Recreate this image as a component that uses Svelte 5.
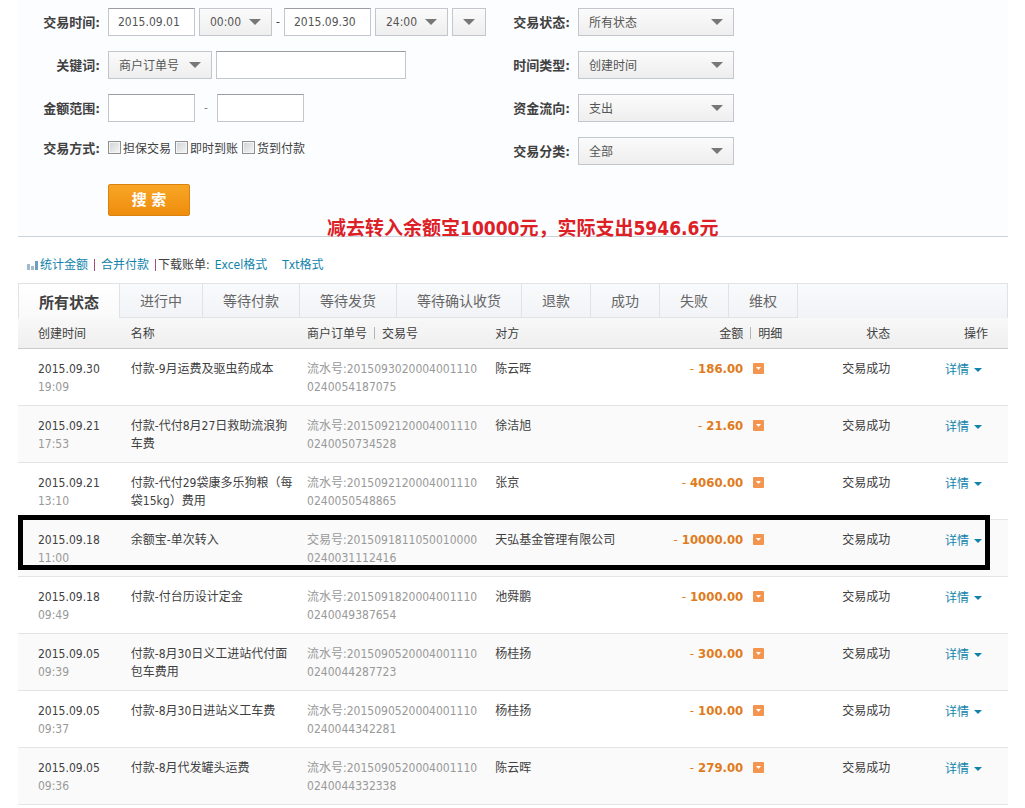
<script>
  const times = ["00:00", "24:00"];
  const methods = ["担保交易", "即时到账", "货到付款"];

  const filters = [
    ["status", "交易状态", "所有状态"],
    ["timeType", "时间类型", "创建时间"],
    ["flow", "资金流向", "支出"],
    ["category", "交易分类", "全部"],
  ];

  const tabs = ["所有状态", "进行中", "等待付款", "等待发货", "等待确认收货", "退款", "成功", "失败", "维权"];
  let activeTab = "所有状态";

  const records = [
    ["2015.09.30", "19:09", "付款-9月运费及驱虫药成本", "流水号:2015093020004001110", "0240054187075", "陈云晖", "186.00"],
    ["2015.09.21", "17:53", "付款-代付8月27日救助流浪狗车费", "流水号:2015092120004001110", "0240050734528", "徐洁旭", "21.60"],
    ["2015.09.21", "13:10", "付款-代付29袋康多乐狗粮（每袋15kg）费用", "流水号:2015092120004001110", "0240050548865", "张京", "4060.00"],
    ["2015.09.18", "11:00", "余额宝-单次转入", "交易号:2015091811050010000", "0240031112416", "天弘基金管理有限公司", "10000.00", true],
    ["2015.09.18", "09:49", "付款-付台历设计定金", "流水号:2015091820004001110", "0240049387654", "池舜鹏", "1000.00"],
    ["2015.09.05", "09:39", "付款-8月30日义工进站代付面包车费用", "流水号:2015090520004001110", "0240044287723", "杨桂扬", "300.00"],
    ["2015.09.05", "09:37", "付款-8月30日进站义工车费", "流水号:2015090520004001110", "0240044342281", "杨桂扬", "100.00"],
    ["2015.09.05", "09:36", "付款-8月代发罐头运费", "流水号:2015090520004001110", "0240044332338", "陈云晖", "279.00"],
  ];
</script>

<style>
  :global(body) {
    background-color: #ffffff;
    color: #404040;
    font: 12px/18px "DejaVu Sans Condensed", "Noto Sans CJK SC", sans-serif;
  }
  main {
    margin: 0 17px 0 18px;
  }
  a {
    color: #1183ab;
    text-decoration: none;
  }
  input, select, button {
    box-sizing: border-box;
    font: inherit;
    color: #555555;
  }
  .search {
    position: relative;
    display: flex;
    padding-bottom: 20px;
    background-color: #fcfdff;
    border-bottom: 1px solid #ccd3dc;
  }
  .left {
    width: 470px;
    padding-top: 8px;
  }
  .right {
    padding-top: 8px;
  }
  .row {
    display: flex;
    align-items: center;
    height: 28px;
    margin-bottom: 15px;
  }
  .label {
    width: 82px;
    margin-right: 8px;
    padding-top: 2px;
    flex-shrink: 0;
    font-size: 13px;
    font-weight: bold;
    text-align: right;
  }
  .text {
    height: 28px;
    padding: 0 9px;
    border: 1px solid #c3c6cc;
    border-top-color: #9a9da3;
    background-color: #ffffff;
  }
  .date {
    width: 87px;
  }
  .keyword {
    width: 190px;
  }
  .drop {
    position: relative;
    margin: 0 4px;
  }
  .drop select {
    display: block;
    width: 100%;
    height: 28px;
    padding: 2px 10px 0;
    border: 1px solid #c3c6cc;
    border-radius: 0;
    background: linear-gradient(#fbfbfb, #eeeeee);
    appearance: none;
  }
  .drop::after {
    content: "";
    position: absolute;
    top: 11px;
    right: 11px;
    border: 6px solid transparent;
    border-top-color: #777777;
    border-bottom: 0;
    pointer-events: none;
  }
  .time {
    width: 73px;
  }
  .time select {
    padding-top: 0;
  }
  .order {
    width: 104px;
    margin-left: 0;
  }
  .more {
    width: 34px;
    margin: 0;
  }
  .wide {
    width: 156px;
    margin: 0;
  }
  .to {
    margin-left: 4px;
  }
  .dash {
    width: 22px;
    text-align: center;
    color: #888888;
  }
  .methods {
    height: 22px;
    margin-bottom: 25px;
  }
  .methods label {
    display: flex;
    align-items: center;
    margin-right: 4px;
    padding-top: 2px;
  }
  .methods input {
    width: 13px;
    height: 13px;
    margin: 0 2px 4px 0;
    border: 1px solid #8e8f8f;
    background: linear-gradient(135deg, #cfd2d6, #f6f6f6);
    box-shadow: inset 0 0 0 1px #f4f4f4;
    appearance: none;
  }
  .submit {
    display: block;
    width: 82px;
    height: 32px;
    margin-left: 90px;
    border: 1px solid #d9820f;
    border-radius: 2px;
    background: linear-gradient(#f8a626, #ef8c0d);
    color: #ffffff;
    font-size: 15px;
    font-weight: bold;
  }
  .note {
    position: absolute;
    left: 309px;
    bottom: -6px;
    margin: 0;
    color: #dd2026;
    font-size: 19px;
    line-height: 28px;
    font-weight: bold;
    white-space: nowrap;
  }
  .tools {
    display: flex;
    align-items: center;
    height: 18px;
    padding: 19px 0 9px 9px;
  }
  .tools svg {
    width: 12px;
    height: 12px;
    margin-right: 1px;
  }
  .tools i {
    width: 1px;
    height: 12px;
    margin: 0 6px;
    background-color: #a0527c;
  }
  .tools i.tight {
    margin-right: 2px;
  }
  .tools .file {
    margin-left: 5px;
    margin-right: 10px;
  }
  .tabs {
    display: flex;
    height: 34px;
    border: 1px solid #e0e2e6;
    border-bottom: 0;
    background: linear-gradient(#f9fafc, #f1f3f6);
  }
  .tabs button {
    padding: 0 20px;
    border: solid #dfe2e7;
    border-width: 0 1px 1px 0;
    background: transparent;
    color: #666666;
    font-size: 14px;
  }
  .tabs button.active {
    padding-top: 3px;
    border-bottom: 0;
    background: linear-gradient(#ffffff, #f9f9f9);
    color: #404040;
    font-size: 15px;
    font-weight: bold;
  }
  table {
    width: 100%;
    table-layout: fixed;
    border-collapse: separate;
    border-spacing: 0;
  }
  th {
    height: 28px;
    padding: 2px 0 0;
    border-bottom: 1px solid #cccccc;
    background: linear-gradient(#f8f8f8, #efefef);
    font-weight: normal;
    text-align: left;
  }
  th:first-child, td:first-child {
    padding-left: 20px;
  }
  th i {
    display: inline-block;
    width: 1px;
    height: 12px;
    margin: 0 7px;
    background-color: #b5b5b5;
    vertical-align: -1px;
  }
  td {
    box-sizing: border-box;
    height: 57px;
    padding: 11px 0 0;
    border-bottom: 1px solid #e4e4e4;
    vertical-align: top;
  }
  tr:nth-child(even) td {
    background-color: #fafafa;
  }
  td.name {
    padding-right: 10px;
  }
  .grey {
    color: #999999;
  }
  .amount {
    text-align: right;
  }
  td.amount {
    padding-right: 18px;
    color: #e07b1c;
    font-size: 13px;
    font-weight: bold;
  }
  td.amount span {
    font-weight: normal;
  }
  .detail {
    width: 11px;
    height: 11px;
    margin-left: 10px;
    padding: 0;
    border: 0;
    background: transparent;
    vertical-align: top;
  }
  .detail svg {
    display: block;
    margin-top: 3px;
  }
  .state, .action {
    text-align: right;
  }
  th.action {
    padding-right: 20px;
  }
  td.action {
    padding-top: 12px;
    padding-right: 26px;
  }
  td.action a::after {
    content: "";
    display: inline-block;
    margin-left: 5px;
    border: 4px solid transparent;
    border-top-color: #1183ab;
    border-bottom: 0;
    vertical-align: 2px;
  }
  .boxed td:first-child {
    position: relative;
  }
  .frame {
    position: absolute;
    top: -5px;
    left: 0;
    width: calc(100vw - 53px);
    height: 55px;
    box-sizing: border-box;
    border: 5px solid #000000;
    z-index: 1;
    pointer-events: none;
  }
</style>

<main>
  <form class="search" on:submit|preventDefault>
    <div class="left">
      <div class="row">
        <label class="label" for="from">交易时间:</label>
        <input class="text date" id="from" value="2015.09.01" />
        <span class="drop time"><select aria-label="00:00">{#each times as time}<option>{time}</option>{/each}</select></span>
        <span>-</span>
        <input class="text date to" aria-label="2015.09.30" value="2015.09.30" />
        <span class="drop time"><select aria-label="24:00" value="24:00">{#each times as time}<option>{time}</option>{/each}</select></span>
        <span class="drop more"><select aria-label="交易时间"><option></option></select></span>
      </div>
      <div class="row">
        <label class="label" for="keyword">关键词:</label>
        <span class="drop order"><select aria-label="商户订单号"><option>商户订单号</option></select></span>
        <input class="text keyword" id="keyword" />
      </div>
      <div class="row">
        <label class="label" for="min">金额范围:</label>
        <input class="text date" id="min" />
        <span class="dash">-</span>
        <input class="text date" aria-label="金额范围" />
      </div>
      <div class="row methods">
        <span class="label">交易方式:</span>
        {#each methods as method}
        <label><input type="checkbox" />{method}</label>
        {/each}
      </div>
      <button class="submit">搜 索</button>
    </div>
    <div class="right">
      {#each filters as [id, name, value]}
      <div class="row">
        <label class="label" for={id}>{name}:</label>
        <span class="drop wide"><select {id}><option>{value}</option></select></span>
      </div>
      {/each}
    </div>
    <p class="note">减去转入余额宝10000元，实际支出5946.6元</p>
  </form>

  <div class="tools">
    <svg viewBox="0 0 12 12">
      <path fill="#9dbace" d="M0 5h3v6H0z" />
      <path fill="#a9b9c6" d="M4 7h3v4H4z" />
      <path fill="#6f9fc0" d="M8 2h3v9H8z" />
    </svg>
    <a href="#stat">统计金额</a>
    <i></i>
    <a href="#merge">合并付款</a>
    <i class="tight"></i>
    <span>下载账单:</span>
    <a class="file" href="#excel">Excel格式</a>
    <a class="file" href="#txt">Txt格式</a>
  </div>

  <nav class="tabs">
    {#each tabs as tab}
    <button class:active={tab === activeTab} on:click={() => activeTab = tab}>{tab}</button>
    {/each}
  </nav>

  <table>
    <colgroup>
      <col style="width: 11.4%" />
      <col style="width: 17.8%" />
      <col style="width: 19%" />
      <col style="width: 16%" />
      <col style="width: 13%" />
      <col style="width: 10.9%" />
      <col />
    </colgroup>
    <thead>
      <tr>
        <th>创建时间</th>
        <th>名称</th>
        <th>商户订单号<i></i>交易号</th>
        <th>对方</th>
        <th class="amount">金额<i></i>明细</th>
        <th class="state">状态</th>
        <th class="action">操作</th>
      </tr>
    </thead>
    <tbody>
      {#each records as [date, time, name, serial, rest, partner, amount, boxed]}
      <tr class:boxed>
        <td>
          {date}<br /><span class="grey">{time}</span>
          {#if boxed}<div class="frame"></div>{/if}
        </td>
        <td class="name">{name}</td>
        <td class="grey">{serial}<br />{rest}</td>
        <td>{partner}</td>
        <td class="amount">
          <span>-</span> {amount}<button class="detail" aria-label="明细"><svg width="11" height="11" viewBox="0 0 11 11">
            <rect width="11" height="11" rx="1" fill="#f3954f" />
            <path fill="#ffffff" d="M3 4h5L5.500 7z" />
          </svg></button>
        </td>
        <td class="state">交易成功</td>
        <td class="action"><a href="#detail">详情</a></td>
      </tr>
      {/each}
    </tbody>
  </table>
</main>
